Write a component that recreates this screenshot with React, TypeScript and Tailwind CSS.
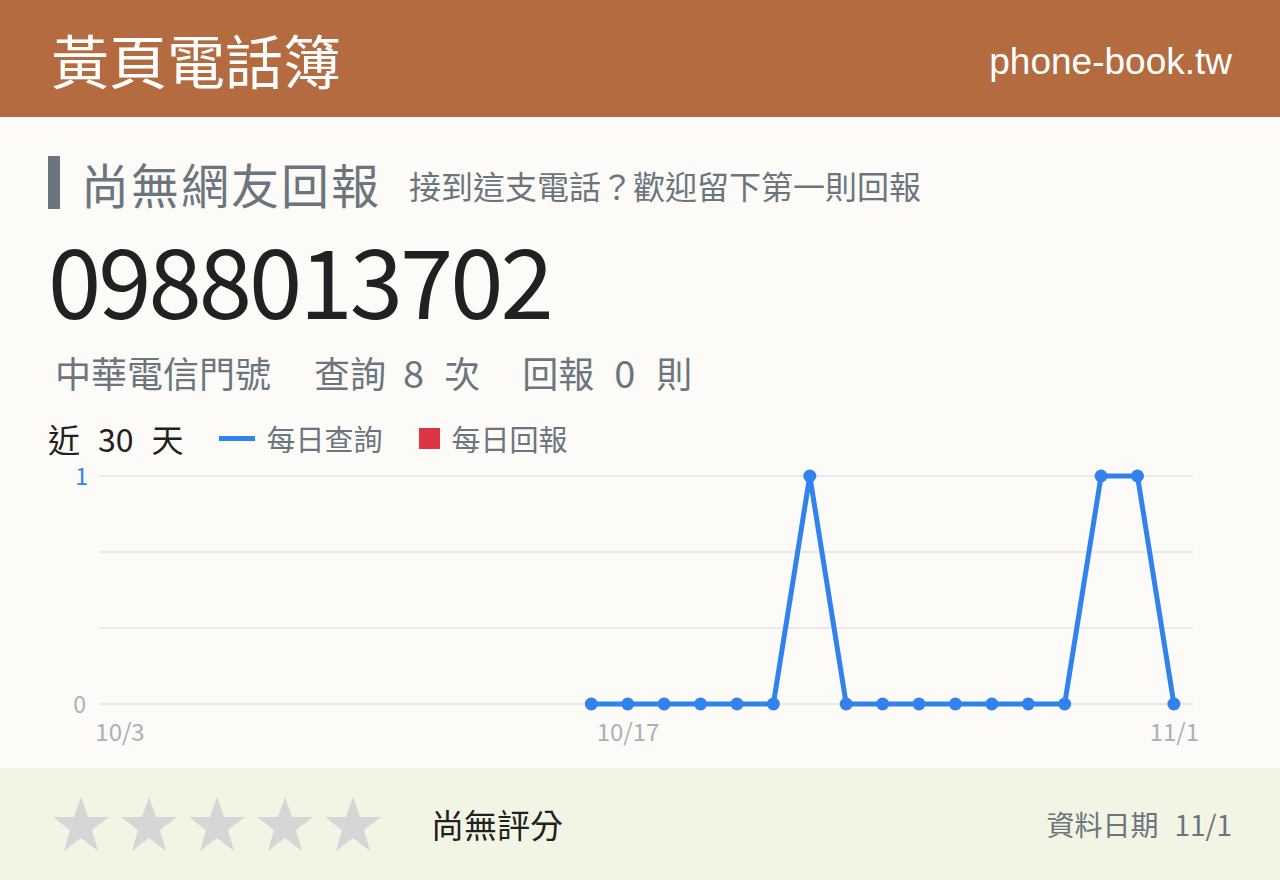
import React from 'react';

const CJK = { fontFamily: '"Noto Sans CJK TC", "Noto Sans CJK JP", sans-serif' };

// 30 days from 10/3 to 11/1, null = no data yet
const queries: (number | null)[] = [
  null, null, null, null, null, null, null, null, null, null, null, null, null,
  0, 0, 0, 0, 0, 0, 1, 0, 0, 0, 0, 0, 0, 0, 1, 1, 0,
];

const X0 = 118;
const STEP = 36.41;
const yOf = (v: number) => 704 - v * 228;

const Star: React.FC = () => (
  <svg width="60" height="58" viewBox="0 0 60 58">
    <polygon
      points="30,2 37,22 58,22 41,35 47,56 30,43 13,56 19,35 2,22 23,22"
      fill="#d6d6d6"
    />
  </svg>
);

const Chart: React.FC = () => {
  const pts = queries
    .map((v, i) => (v === null ? null : { x: X0 + i * STEP, y: yOf(v) }))
    .filter((p): p is { x: number; y: number } => p !== null);

  return (
    <svg width="1160" height="305" viewBox="48 455 1160 305" style={CJK}>
      {[476, 552, 628, 704].map((y) => (
        <line key={y} x1="100" x2="1193" y1={y} y2={y} stroke="#e9eaee" strokeWidth="2" />
      ))}
      <text x="88" y="485" fontSize="23" fill="#3182ed" textAnchor="end">1</text>
      <text x="86" y="713" fontSize="23" fill="#aab0b7" textAnchor="end">0</text>
      <text x="120" y="741" fontSize="24" fill="#aab0b7" textAnchor="middle">10/3</text>
      <text x="628" y="741" fontSize="24" fill="#aab0b7" textAnchor="middle">10/17</text>
      <text x="1199" y="741" fontSize="24" fill="#aab0b7" textAnchor="end">11/1</text>
      <polyline
        points={pts.map((p) => `${p.x},${p.y}`).join(' ')}
        fill="none"
        stroke="#3182ed"
        strokeWidth="5"
        strokeLinejoin="round"
      />
      {pts.map((p, i) => (
        <circle key={i} cx={p.x} cy={p.y} r="6.5" fill="#3182ed" />
      ))}
    </svg>
  );
};

export default function App() {
  return (
    <div className="w-[1280px] h-[880px] flex flex-col bg-[#fcfbf7]" style={CJK}>
      <header className="h-[117px] shrink-0 bg-[#b56b40] flex items-center justify-between pl-[51px] pr-[48px]">
        <h1 className="text-[58px] leading-none text-white">黃頁電話簿</h1>
        <span
          className="pt-[6px] text-[37px] leading-none text-white"
          style={{ fontFamily: '"Liberation Sans", Arial, sans-serif' }}
        >
          phone-book.tw
        </span>
      </header>

      <main className="flex-1 px-[48px] pt-[39px]">
        <div className="flex items-center h-[53px]">
          <div className="w-[12px] h-[53px] bg-[#6c757d]" />
          <h2 className="ml-[21px] text-[48px] leading-[48px] tracking-[2px] text-[#6c757d]">尚無網友回報</h2>
          <p className="ml-[28px] text-[32px] leading-[32px] text-[#6c757d] pt-[4px]">接到這支電話？歡迎留下第一則回報</p>
        </div>

        <div className="mt-[21px] h-[96px] text-[96px] leading-none tracking-[-3px] text-[#212121]">
          0988013702
        </div>

        <div className="mt-[30px] ml-[7px] flex items-center text-[36px] leading-[32px] text-[#6c757d]">
          <span>中華電信門號</span>
          <span className="ml-[43px]">查詢</span>
          <span className="ml-[17px] text-[38px]">8</span>
          <span className="ml-[20px]">次</span>
          <span className="ml-[42px]">回報</span>
          <span className="ml-[20px] text-[38px]">0</span>
          <span className="ml-[21px]">則</span>
        </div>

        <div className="mt-[36px] flex items-center h-[28px]">
          <div className="flex items-center text-[32px] leading-none text-[#212121]">
            <span>近</span>
            <span className="ml-[18px]">30</span>
            <span className="ml-[18px]">天</span>
          </div>
          <span className="ml-[35px] w-[36px] h-[5px] bg-[#3182ed]" />
          <span className="ml-[12px] text-[29px] leading-none text-[#6c757d]">每日查詢</span>
          <span className="ml-[36px] w-[21px] h-[21px] bg-[#dc3545]" />
          <span className="ml-[12px] text-[29px] leading-none text-[#6c757d]">每日回報</span>
        </div>

        <div className="mt-[3px]">
          <Chart />
        </div>
      </main>

      <footer className="h-[112px] shrink-0 bg-[#f2f5e3] flex items-center pl-[51px] pr-[48px]">
        <div className="flex gap-[8px]">
          <Star />
          <Star />
          <Star />
          <Star />
          <Star />
        </div>
        <span className="ml-[48px] text-[33px] leading-none text-[#212121]">尚無評分</span>
        <span className="ml-auto text-[28px] leading-none text-[#6c757d]">
          資料日期<span className="ml-[16px]">11/1</span>
        </span>
      </footer>
    </div>
  );
}
